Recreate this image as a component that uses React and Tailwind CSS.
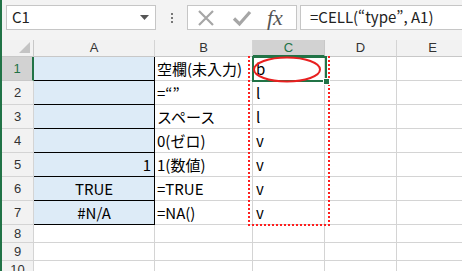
import React from 'react';

const cellFont = { fontFamily: '"Noto Sans CJK JP", "Noto Sans", sans-serif' };

const rows = [
  { n: 1, a: '', aAlign: 'left', b: '空欄(未入力)', c: 'b' },
  { n: 2, a: '', aAlign: 'left', b: '=“”', c: 'l' },
  { n: 3, a: '', aAlign: 'left', b: 'スペース', c: 'l' },
  { n: 4, a: '', aAlign: 'left', b: '0(ゼロ)', c: 'v' },
  { n: 5, a: '1', aAlign: 'right', b: '1(数値)', c: 'v' },
  { n: 6, a: 'TRUE', aAlign: 'center', b: '=TRUE', c: 'v' },
  { n: 7, a: '#N/A', aAlign: 'center', b: '=NA()', c: 'v' },
];

const alignClass = {
  left: 'justify-start pl-[2px]',
  right: 'justify-end pr-[3px]',
  center: 'justify-center',
};

const App = () => {
  return (
    <div lang="ja" className="relative w-[462px] h-[271px] overflow-hidden bg-white border-l-2 border-[#217346] font-['Liberation_Sans',sans-serif]">
      {/* formula bar */}
      <div className="flex h-[40px] bg-[#f3f3f3] pt-[5px] pl-[4px]">
        <div className="w-[150px] h-[25px] bg-white border border-[#c6c6c6] flex items-center justify-between pl-[5px] pr-[6px]">
          <span className="text-[15px] text-[#222]" style={cellFont}>C1</span>
          <svg width="9" height="5" viewBox="0 0 9 5"><polygon points="0,0 9,0 4.5,5" fill="#555" /></svg>
        </div>
        <div className="w-[31px] h-[25px] flex flex-col items-center justify-center gap-[2px]">
          <div className="w-[2px] h-[2px] bg-[#777]" />
          <div className="w-[2px] h-[2px] bg-[#777]" />
          <div className="w-[2px] h-[2px] bg-[#777]" />
        </div>
        <div className="w-[110px] h-[25px] bg-white border border-[#c6c6c6] flex items-center pl-[9px]">
          <svg width="18" height="18" viewBox="0 0 18 18">
            <path d="M2 2 L16 16 M16 2 L2 16" stroke="#a6a6a6" strokeWidth="2.2" fill="none" />
          </svg>
          <svg className="ml-[17px]" width="20" height="18" viewBox="0 0 20 18">
            <path d="M2 9.5 L7.5 15 L18 3" stroke="#a6a6a6" strokeWidth="3.2" fill="none" />
          </svg>
          <span className="ml-[15px] text-[22px] leading-none italic text-[#555] font-['Liberation_Serif',serif]">fx</span>
        </div>
        <div className="flex-1 h-[25px] ml-[3px] bg-white border border-[#c6c6c6] border-r-0 flex items-center pl-[9px]">
          <span className="text-[15px] text-[#222] whitespace-nowrap" style={cellFont}>=CELL(“type”, A1)</span>
        </div>
      </div>

      {/* sheet grid */}
      <div className="grid grid-cols-[32px_121px_98px_72px_72px_72px] grid-rows-[17px_repeat(7,24px)_repeat(3,18px)] w-[467px]">
        <div className="bg-[#f2f2f2] border-r border-b border-[#c8c8c8] flex items-end justify-end pr-[3px] pb-[3px]">
          <svg width="11" height="11" viewBox="0 0 11 11"><polygon points="11,0 11,11 0,11" fill="#c4c4c4" /></svg>
        </div>
        {['A', 'B', 'C', 'D', 'E'].map((col) => (
          <div
            key={col}
            className={
              col === 'C'
                ? 'bg-[#d2d2d2] border-r border-[#c8c8c8] border-b-2 border-b-[#217346] flex items-center justify-center text-[13px] text-[#217346]'
                : 'bg-[#f2f2f2] border-r border-b border-[#d4d4d4] border-b-[#c8c8c8] flex items-center justify-center text-[13px] text-[#333]'
            }
          >
            {col}
          </div>
        ))}

        {rows.map((r) => (
          <React.Fragment key={r.n}>
            <div
              className={
                r.n === 1
                  ? 'bg-[#d2d2d2] border-r-2 border-[#217346] border-b border-b-[#c8c8c8] flex items-end justify-center pb-[2px] text-[13px] text-[#217346]'
                  : 'bg-[#f2f2f2] border-r border-b border-[#d4d4d4] flex items-end justify-center pb-[2px] text-[13px] text-[#333]'
              }
            >
              {r.n}
            </div>
            <div className={`bg-[#ddebf7] border-r border-b border-black flex items-end pb-[2px] text-[15px] leading-[18px] text-black ${alignClass[r.aAlign]}`} style={cellFont}>
              {r.a}
            </div>
            <div className="border-r border-b border-[#d4d4d4] flex items-end pl-[2px] pb-[2px] text-[15px] leading-[18px] text-black whitespace-nowrap" style={cellFont}>
              {r.b}
            </div>
            <div className="border-r border-b border-[#d4d4d4] flex items-end pl-[3px] pb-[2px] text-[15px] leading-[18px] text-black" style={cellFont}>
              {r.c}
            </div>
            <div className="border-r border-b border-[#d4d4d4]" />
            <div className="border-r border-b border-[#d4d4d4]" />
          </React.Fragment>
        ))}

        {[8, 9, 10].map((n) => (
          <React.Fragment key={n}>
            <div className="bg-[#f2f2f2] border-r border-b border-[#d4d4d4] flex items-center justify-center text-[13px] text-[#333]">
              {n}
            </div>
            <div className="border-r border-b border-[#d4d4d4]" />
            <div className="border-r border-b border-[#d4d4d4]" />
            <div className="border-r border-b border-[#d4d4d4]" />
            <div className="border-r border-b border-[#d4d4d4]" />
            <div className="border-r border-b border-[#d4d4d4]" />
          </React.Fragment>
        ))}
      </div>

      {/* copy marquee around C1:C7 */}
      <div className="absolute left-[246px] top-[56px] w-[82px] h-[170px] border-2 border-dotted border-[#ff1f1f] pointer-events-none" />

      {/* active cell C1 */}
      <div className="absolute left-[250px] top-[56px] w-[75px] h-[26px] border-2 border-[#217346] pointer-events-none" />
      <div className="absolute left-[321px] top-[78px] w-[7px] h-[7px] bg-[#217346] border border-white" />

      {/* red ellipse annotation */}
      <svg className="absolute left-[249px] top-[55px]" width="74" height="30" viewBox="0 0 74 30">
        <ellipse cx="36" cy="14.5" rx="33" ry="12" fill="none" stroke="#e82020" strokeWidth="2" />
      </svg>
    </div>
  );
};

export default App;
